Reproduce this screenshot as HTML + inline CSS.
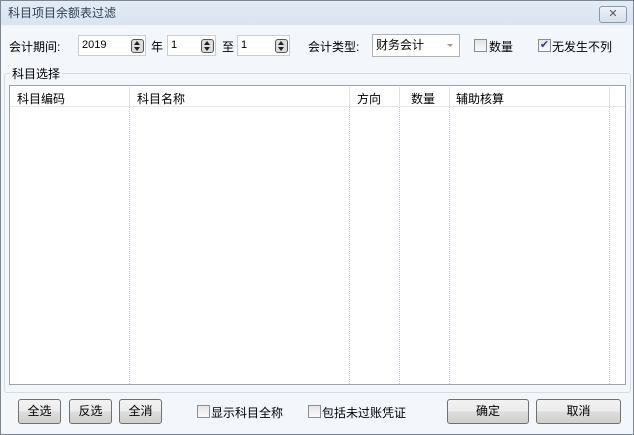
<!DOCTYPE html>
<html><head><meta charset="utf-8"><style>
*{box-sizing:border-box;margin:0;padding:0}
body{width:634px;height:435px;overflow:hidden;font-family:"Liberation Sans","Noto Sans CJK SC",sans-serif;font-size:12px;color:#000;background:#fff}
.win{position:absolute;left:0;top:0;width:634px;height:435px;border:1px solid #7a8796;background:#f3f6fb}
.tb{position:absolute;left:0;top:0;width:632px;height:24px;background:linear-gradient(#e3ebf5,#d9e4f1);color:#2c3e55;font-size:12px;line-height:24px;padding-left:7px}
.x{position:absolute;left:598px;top:5px;width:28px;height:17px;border:1px solid #8a98a8;border-radius:3px;background:linear-gradient(#eef2f8,#d6dfeb);font-size:11px;text-align:center;line-height:14px;color:#555}
.a{position:absolute;white-space:nowrap}
.in{position:absolute;height:21px;background:#fff;border:1px solid #c8ced6;padding-left:3px;line-height:19px;font-size:11px}
.sp{position:absolute;width:13px;height:14px;border:1px solid #555;border-radius:3px;background:#ddd;top:3px;right:1px}
.sp:before{content:"";position:absolute;left:2px;top:1px;border:3px solid transparent;border-bottom:4px solid #222;border-top:0}
.sp:after{content:"";position:absolute;left:2px;top:7px;border:3px solid transparent;border-top:4px solid #222;border-bottom:0}
.cb{position:absolute;width:13px;height:13px;border:1px solid #8a8f96;background:linear-gradient(#e4e4e4,#fafafa)}
.btn{position:absolute;height:25px;border:1px solid #707070;border-radius:3px;background:linear-gradient(#f2f2f2 0%,#ebebeb 50%,#dddddd 51%,#cfcfcf 100%);text-align:center;line-height:23px}
.col{position:absolute;top:106px;height:277px;border-left:1px dotted #b8c8dc}
</style></head><body><div class="win">
<div class="tb">科目项目余额表过滤</div>
<div class="x">✕</div>
<div class="a" style="left:8px;top:37px">会计期间:</div>
<div class="in" style="left:77px;top:34px;width:68px">2019<div class="sp"></div></div>
<div class="a" style="left:150px;top:37px">年</div>
<div class="in" style="left:166px;top:34px;width:49px">1<div class="sp"></div></div>
<div class="a" style="left:221px;top:37px">至</div>
<div class="in" style="left:236px;top:34px;width:53px">1<div class="sp"></div></div>
<div class="a" style="left:307px;top:37px">会计类型:</div>
<div class="in" style="left:371px;top:33px;width:88px;height:23px;border-color:#abb3bd;font-size:12px;line-height:20px">财务会计<span style="position:absolute;right:6px;top:9px;border:3px solid transparent;border-top:3px solid #999"></span></div>
<div class="cb" style="left:473px;top:38px"></div><div class="a" style="left:488px;top:37px">数量</div>
<div class="cb" style="left:537px;top:38px;color:#2a3f9a;font-size:11px;line-height:10px;text-align:center">✔</div><div class="a" style="left:551px;top:37px">无发生不列</div>
<div style="position:absolute;left:3px;top:72px;width:627px;height:320px;border:1px solid #d2dbe6;border-radius:3px"></div>
<div class="a" style="left:9px;top:64px;background:#f3f6fb;padding:0 2px">科目选择</div>
<div style="position:absolute;left:8px;top:84px;width:617px;height:300px;border:1px solid #9aa4b0;background:#fff"></div>
<div style="position:absolute;left:9px;top:85px;width:615px;height:21px;background:#fff;border-bottom:1px solid #e3e6ea"></div>
<div class="a" style="left:16px;top:89px">科目编码</div>
<div class="a" style="left:136px;top:89px">科目名称</div>
<div class="a" style="left:356px;top:89px">方向</div>
<div class="a" style="left:410px;top:89px">数量</div>
<div class="a" style="left:455px;top:89px">辅助核算</div>
<div style="position:absolute;left:128px;top:86px;height:20px;border-left:1px solid #e0e3e8"></div>
<div style="position:absolute;left:348px;top:86px;height:20px;border-left:1px solid #e0e3e8"></div>
<div style="position:absolute;left:398px;top:86px;height:20px;border-left:1px solid #e0e3e8"></div>
<div style="position:absolute;left:448px;top:86px;height:20px;border-left:1px solid #e0e3e8"></div>
<div style="position:absolute;left:608px;top:86px;height:20px;border-left:1px solid #e0e3e8"></div>
<div class="col" style="left:128px"></div><div class="col" style="left:348px"></div><div class="col" style="left:398px"></div><div class="col" style="left:448px"></div><div class="col" style="left:608px"></div>
<div class="btn" style="left:17px;top:398px;width:43px">全选</div>
<div class="btn" style="left:68px;top:398px;width:43px">反选</div>
<div class="btn" style="left:118px;top:398px;width:43px">全消</div>
<div class="cb" style="left:196px;top:404px"></div><div class="a" style="left:210px;top:403px">显示科目全称</div>
<div class="cb" style="left:307px;top:404px"></div><div class="a" style="left:321px;top:403px">包括未过账凭证</div>
<div class="btn" style="left:446px;top:398px;width:82px">确定</div>
<div class="btn" style="left:535px;top:398px;width:85px">取消</div>
</div></body></html>
